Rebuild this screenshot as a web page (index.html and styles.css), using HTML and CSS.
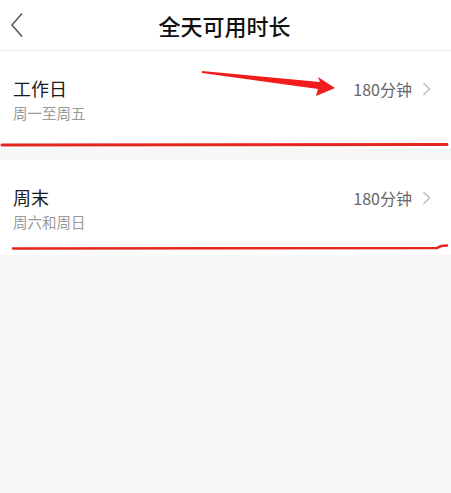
FILE: index.html
```html
<!DOCTYPE html>
<html lang="zh">

<head>
    <meta charset="UTF-8">
    <title>全天可用时长</title>
    <link rel="stylesheet" href="styles.css">
</head>

<body>
    <header class="topbar">
        <span class="tilbage">
            <svg width="14" height="26" viewBox="0 0 14 26">
                <polyline points="12,1.5 2,13 12,24.5" fill="none" stroke="#555" stroke-width="1.5" />
            </svg>
        </span>
        <h1>全天可用时长</h1>
    </header>

    <section class="liste">
        <div class="raekke">
            <div class="tekst">
                <p class="navn">工作日</p>
                <p class="kort">周一至周五</p>
            </div>
            <div class="vaerdi">180分钟 <span class="pil">
                <svg width="9" height="14" viewBox="0 0 9 14">
                    <polyline points="1.5,1 7.5,7 1.5,13" fill="none" stroke="#bbb" stroke-width="1.4" />
                </svg>
            </span></div>
        </div>
        <div class="raekke anden">
            <div class="tekst">
                <p class="navn">周末</p>
                <p class="kort">周六和周日</p>
            </div>
            <div class="vaerdi">180分钟 <span class="pil">
                <svg width="9" height="14" viewBox="0 0 9 14">
                    <polyline points="1.5,1 7.5,7 1.5,13" fill="none" stroke="#bbb" stroke-width="1.4" />
                </svg>
            </span></div>
        </div>
    </section>

    <!-- markeringer tegnet oven på listen -->
    <svg class="markering" width="451" height="493" viewBox="0 0 451 493">
        <polygon points="202,71 320,82 318,77 335,88 316,96 318,89 202,73" fill="#f21c1c" />
        <path d="M2,145 L447,144.5" stroke="#e3261e" stroke-width="3" stroke-linecap="round" fill="none" />
        <path d="M13,248.5 L437,248 L441,246 L447,245.5" stroke="#e3261e" stroke-width="2.6" stroke-linecap="round" fill="none" />
    </svg>
</body>

</html>
```

FILE: styles.css
```css
body {
    margin: 0;
    background-color: #f7f7f7;
    font-family: "Noto Sans CJK SC", "Noto Sans", sans-serif;
    position: relative;
    width: 451px;
    height: 493px;
    overflow: hidden;
}

.topbar {
    height: 50px;
    background-color: #fff;
    border-bottom: 1px solid #ebebeb;
    display: flex;
    align-items: center;
    justify-content: center;
    position: relative;
}

.topbar h1 {
    margin: 0 0 0 -2px;
    font-size: 22px;
    font-weight: 500;
    color: #111;
}

.tilbage {
    position: absolute;
    left: 10px;
    top: 12px;
}

.liste {
    display: flex;
    flex-direction: column;
    gap: 12px;
}

.raekke {
    background-color: #fff;
    height: 97px;
    padding: 0 20px 0 13px;
    display: flex;
    align-items: flex-start;
    justify-content: space-between;
}

.anden {
    height: 95px;
}

.tekst {
    padding-top: 25px;
}

.navn {
    margin: 0;
    font-size: 18px;
    line-height: 24px;
    color: #1a1a1a;
}

.kort {
    margin: 2px 0 0;
    font-size: 14.5px;
    line-height: 22px;
    color: #9a9a9a;
}

.vaerdi {
    padding-top: 26px;
    font-size: 16px;
    line-height: 24px;
    color: #666;
    display: flex;
    align-items: center;
    gap: 10px;
}

.pil {
    display: flex;
}

.markering {
    position: absolute;
    left: 0;
    top: 0;
    pointer-events: none;
}
```
